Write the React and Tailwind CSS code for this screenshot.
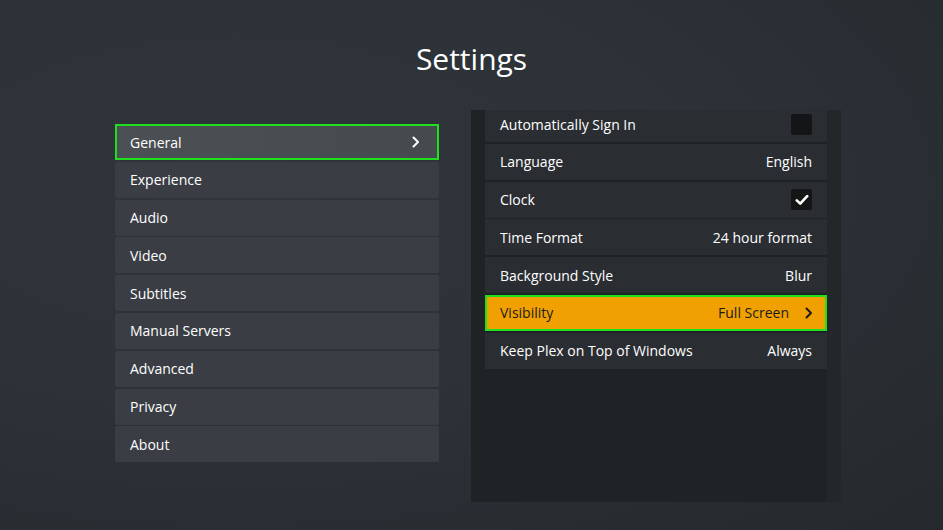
import React from 'react'

const sections = [
  'General',
  'Experience',
  'Audio',
  'Video',
  'Subtitles',
  'Manual Servers',
  'Advanced',
  'Privacy',
  'About',
]

const rows = [
  { label: 'Automatically Sign In', type: 'check', value: false },
  { label: 'Language', value: 'English' },
  { label: 'Clock', type: 'check', value: true },
  { label: 'Time Format', value: '24 hour format' },
  { label: 'Background Style', value: 'Blur' },
  { label: 'Visibility', value: 'Full Screen', focused: true },
  { label: 'Keep Plex on Top of Windows', value: 'Always' },
]

function Chevron({ className }) {
  return (
    <svg width="8" height="12" viewBox="0 0 8 12" className={className}>
      <path d="M1.5 1.5 L6 6 L1.5 10.5" fill="none" stroke="currentColor" strokeWidth="2" strokeLinecap="round" strokeLinejoin="round" />
    </svg>
  )
}

function Checkbox({ checked }) {
  return (
    <div className="w-[21px] h-[21px] rounded-[2px] bg-[#131517] flex items-center justify-center">
      {checked && (
        <svg width="14" height="12" viewBox="0 0 14 12">
          <path d="M1.8 6.4 L5.2 9.6 L12.2 2.2" fill="none" stroke="#ffffff" strokeWidth="2.6" strokeLinecap="round" strokeLinejoin="round" />
        </svg>
      )}
    </div>
  )
}

function App() {
  return (
    <div
      className="w-[943px] h-[530px] overflow-hidden bg-[radial-gradient(ellipse_at_25%_35%,#2f353b_0%,#2c3238_45%,#25292d_100%)] text-white"
      style={{ fontFamily: '"Open Sans", "Noto Sans", sans-serif' }}
    >
      <h1 className="pt-[38px] text-center text-[30px] leading-[42px] font-normal">Settings</h1>

      <div className="mt-[30px] flex pl-[115px] gap-[32px] text-[14px]">
        {/* section list */}
        <div className="mt-[14px] w-[324px] flex flex-col gap-[1.8px]">
          {sections.map((name, i) =>
            i === 0 ? (
              <div
                key={name}
                className="h-[36px] flex items-center justify-between px-[13px] border-2 border-[#1fe01f] bg-gradient-to-r from-[#4b5054] to-[#464a4e]"
              >
                <span>{name}</span>
                <Chevron className="text-white mr-[4px]" />
              </div>
            ) : (
              <div key={name} className="h-[36px] flex items-center px-[15px] rounded-[2px] bg-[#3a3e44]">
                {name}
              </div>
            )
          )}
        </div>

        {/* settings panel */}
        <div className="w-[370px] h-[392px] bg-[#1f2326] overflow-hidden relative">
          <div className="absolute right-0 top-0 w-[14px] h-full bg-[#23272a]" />
          <div className="-mt-[4px] px-[14px] flex flex-col gap-[1.8px] relative">
            {rows.map((row) =>
              row.focused ? (
                <div
                  key={row.label}
                  className="h-[36px] flex items-center justify-between pl-[13px] pr-[12px] border-2 border-[#1fe01f] bg-[#f0a000] text-[#1b1b1b]"
                >
                  <span>{row.label}</span>
                  <span className="flex items-center gap-[16px]">
                    {row.value}
                    <Chevron className="text-[#1b1b1b]" />
                  </span>
                </div>
              ) : (
                <div key={row.label} className="h-[36px] flex items-center justify-between px-[15px] bg-[#2a2e32]">
                  <span>{row.label}</span>
                  {row.type === 'check' ? <Checkbox checked={row.value} /> : <span>{row.value}</span>}
                </div>
              )
            )}
          </div>
        </div>
      </div>
    </div>
  )
}

export default App
